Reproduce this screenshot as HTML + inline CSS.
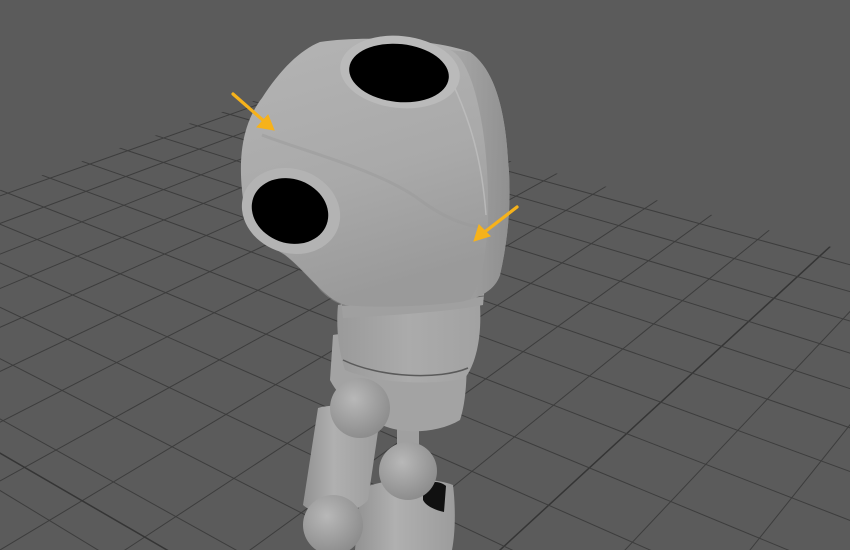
<!DOCTYPE html>
<html><head><meta charset="utf-8"><style>
html,body{margin:0;padding:0;background:#5b5b5b;width:850px;height:550px;overflow:hidden;position:relative;}
svg{display:block;position:absolute;left:0;top:0;}
</style></head><body>
<svg width="850" height="550" viewBox="0 0 850 550" xmlns="http://www.w3.org/2000/svg">
<defs>
<clipPath id="g"><polygon points="0,190 268,96 850,252 850,550 0,550"/></clipPath>
<clipPath id="f"><rect width="850" height="550"/></clipPath>
<linearGradient id="hd" x1="0" y1="0" x2="0.3" y2="1">
<stop offset="0" stop-color="#b4b4b4"/><stop offset="0.6" stop-color="#a9a9a9"/><stop offset="1" stop-color="#9a9a9a"/></linearGradient>
<linearGradient id="rs" x1="0" y1="0" x2="1" y2="0">
<stop offset="0" stop-color="#a6a6a6"/><stop offset="1" stop-color="#8e8e8e"/></linearGradient>
<radialGradient id="ball" cx="0.4" cy="0.35" r="0.7">
<stop offset="0" stop-color="#b8b8b8"/><stop offset="1" stop-color="#8a8a8a"/></radialGradient>
<linearGradient id="cyl" x1="0" y1="0" x2="1" y2="0">
<stop offset="0" stop-color="#929292"/><stop offset="0.4" stop-color="#b0b0b0"/><stop offset="1" stop-color="#9c9c9c"/></linearGradient>
<linearGradient id="tor" x1="0" y1="0" x2="1" y2="0">
<stop offset="0" stop-color="#9a9a9a"/><stop offset="0.5" stop-color="#ababab"/><stop offset="1" stop-color="#a2a2a2"/></linearGradient>
</defs>
<g clip-path="url(#f)">
<rect width="850" height="550" fill="#5b5b5b"/>
<g clip-path="url(#g)" stroke="#3d3d3d" stroke-width="1" fill="none">
<path d="M1440 -314 L-3440 1414 M1440 -314 L-3190 1414 M1440 -314 L-2940 1414 M1440 -314 L-2690 1414 M1440 -314 L-2440 1414 M1440 -314 L-2190 1414 M1440 -314 L-1940 1414 M1440 -314 L-1690 1414 M1440 -314 L-1440 1414 M1440 -314 L-1190 1414 M1440 -314 L-940 1414 M1440 -314 L-690 1414 M1440 -314 L-190 1414 M1440 -314 L60 1414 M1440 -314 L310 1414 M1440 -314 L560 1414 M1440 -314 L810 1414 M1440 -314 L1060 1414"/>
<path d="M1440 -314 L-440 1414" stroke="#353535" stroke-width="1.5"/>
<path d="M-1374 -344 L1570 1444 M-1374 -344 L1846 1444 M-1374 -344 L2122 1444 M-1374 -344 L2398 1444 M-1374 -344 L2674 1444 M-1374 -344 L2950 1444 M-1374 -344 L3226 1444 M-1374 -344 L3502 1444 M-1374 -344 L3778 1444 M-1374 -344 L4054 1444 M-1374 -344 L4330 1444 M-1374 -344 L4606 1444 M-1374 -344 L4882 1444 M-1374 -344 L5158 1444 M-1374 -344 L5434 1444 M-1374 -344 L5710 1444"/>
<path d="M-1374 -344 L1708 1444" stroke="#353535" stroke-width="1.5"/>
</g>
<path d="M360 490 C380 478 430 476 453 485 C456 510 455 535 452 550 L355 550 Z" fill="url(#cyl)"/>
<path d="M423 484 C432 480 442 482 446 486 L444 512 C435 510 426 506 423 500 Z" fill="#111"/>
<rect x="397" y="428" width="22" height="30" fill="#a0a0a0"/>
<circle cx="408" cy="471" r="29" fill="url(#ball)"/>
<path d="M333 335 C360 330 440 330 466 345 C468 380 465 405 460 420 C440 432 410 434 390 428 C365 420 340 400 330 380 Z" fill="#a3a3a3"/>
<path d="M318 408 C335 403 362 406 380 418 L368 500 C355 515 320 520 303 505 Z" fill="url(#cyl)"/>
<circle cx="360" cy="408" r="30" fill="url(#ball)"/>
<circle cx="333" cy="525" r="30" fill="url(#ball)"/>
<path d="M338 305 C380 296 450 296 480 305 C482 340 475 365 465 378 C440 385 380 385 345 370 C338 350 336 325 338 305 Z" fill="url(#tor)"/>
<path d="M343 360 C380 378 440 380 468 368" stroke="#5a5a5a" stroke-width="1.5" fill="none"/>
<path d="M340 292 C380 288 450 286 485 285 L483 305 C450 312 380 316 343 318 Z" fill="#a0a0a0"/>
<path d="M342 305 C380 304 450 300 484 296" stroke="#6a6a6a" stroke-width="1" fill="none"/>
<path d="M320 42 C360 36 430 38 470 52 C495 70 505 110 508 160 C512 200 508 240 500 275 C495 290 480 298 460 302 C420 307 370 308 345 305 C325 300 305 270 285 255 C260 240 245 225 242 190 C238 150 245 120 262 98 C280 70 300 50 320 42 Z" fill="url(#hd)"/>
<path d="M450 50 C475 60 490 140 488 220 C486 260 480 285 470 300 L460 302 C480 298 495 290 500 275 C508 240 512 200 508 160 C505 110 495 70 470 52 Z" fill="url(#rs)" opacity="0.9"/>
<path d="M452 82 C470 120 482 160 486 215" stroke="#c2c2c2" stroke-width="1.5" fill="none" opacity="0.7"/>
<path d="M262 135 C300 150 380 170 420 200 C450 222 480 232 498 225" stroke="#9a9a9a" stroke-width="3" fill="none" opacity="0.5"/>
<path d="M250 225 C270 245 300 262 320 290 C330 300 340 305 345 305 C325 300 305 270 285 255 C265 242 252 232 250 225 Z" fill="#8f8f8f" opacity="0.6"/>
<ellipse cx="400" cy="72" rx="60" ry="36" transform="rotate(6 400 72)" fill="#bababa"/>
<ellipse cx="399" cy="73" rx="50" ry="29" transform="rotate(6 399 73)" fill="#000"/>
<ellipse cx="291" cy="211" rx="50" ry="42" transform="rotate(20 291 211)" fill="#b3b3b3"/>
<ellipse cx="290" cy="211" rx="39" ry="32" transform="rotate(20 290 211)" fill="#000"/>
<g stroke="#f6b21b" stroke-width="3.2" fill="#f6b21b" stroke-linecap="round">
<line x1="233" y1="94" x2="265" y2="122"/>
<polygon points="274,130 257,127 268,115" stroke-width="1"/>
<line x1="517" y1="207" x2="482" y2="234"/>
<polygon points="474,241 479,225 490,236" stroke-width="1"/>
</g>
</g>
</svg>
</body></html>
